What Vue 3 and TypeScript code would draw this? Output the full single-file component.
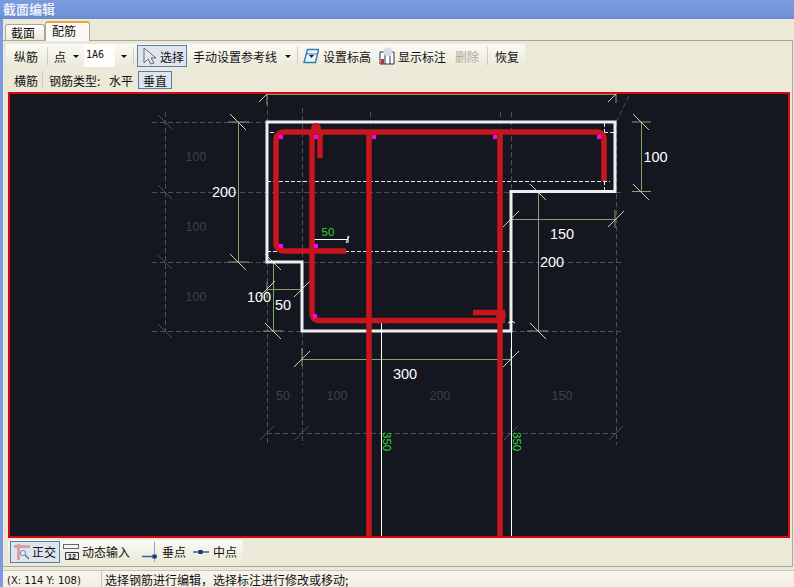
<template>
  <div class="win">
    <div class="title">截面编辑</div>
    <div class="body">
      <div class="tabs">
        <div class="tab">截面</div>
        <div class="tab active">配筋</div>
      </div>
      <div class="panel">
        <div class="bar bar1">
          <span class="item label">纵筋</span>
          <i class="sep"></i>
          <span class="item dots">点<b class="arrow"></b></span>
          <span class="combo">1A6</span>
          <b class="arrow a2"></b>
          <i class="sep s2"></i>
          <button class="btn sel">
            <svg width="16" height="18" viewBox="0 0 16 18"><path d="M3 1v15l4-4 3 5 3-1-3-5h5z" fill="#e8e8e8" stroke="#667" stroke-width="1"/></svg>
            选择
          </button>
          <span class="item ref">手动设置参考线<b class="arrow a3"></b></span>
          <i class="sep s5"></i>
          <span class="item ico">
            <svg width="16" height="16" viewBox="0 0 16 16"><path d="M4.500 1.500h11l-3 13H1z" fill="#eef6fb" stroke="#2f7fb5" stroke-width="1.400"/><path d="M3.500 6h11" stroke="#2f7fb5"/><path d="M6 7h5l-2.500 3z" fill="#123"/></svg>
            设置标高
          </span>
          <span class="item ico i2">
            <svg width="16" height="18" viewBox="0 0 16 18"><path d="M1 5h14v12H1z" fill="#fff" stroke="#234"/><path d="M6 5v12M11 5v12" stroke="#234"/><circle cx="9" cy="5" r="4.500" fill="#d8dce0"/><path d="M2 12h3v5H2z" fill="#b33"/></svg>
            显示标注
          </span>
          <span class="item off">删除</span>
          <i class="sep s3"></i>
          <span class="item last">恢复</span>
        </div>
        <div class="bar bar2">
          <span class="item label">横筋</span>
          <i class="sep s4"></i>
          <span class="item type">钢筋类型:</span>
          <span class="item flat">水平</span>
          <button class="btn vert">垂直</button>
        </div>
        <div class="canvas">
          <svg class="draw" viewBox="10 94 778 442" width="778" height="442">
            <g stroke="#4c5054" stroke-dasharray="5 3" fill="none">
              <path v-for="l in grid" :key="l" :d="l" />
            </g>
            <g stroke="#4c5054">
              <path v-for="t in grayTicks" :key="t" :d="t" />
            </g>
            <g stroke="#e8e8e8" stroke-dasharray="4 2" fill="none">
              <path d="M267 181.500H610M267 251.500H510M270 132.500h6M604 132.500h11M604.500 123v9M604.500 181v10" />
            </g>
            <g fill="#3e4248" class="ghost">
              <text v-for="g in ghosts" :key="g.x + '-' + g.y" :x="g.x" :y="g.y" text-anchor="middle">{{ g.t }}</text>
            </g>
            <g stroke="#7fa56d" fill="none">
              <path d="M267 94.500H616M267 92v13M616 92v11" />
              <path d="M238.500 122V262M228 122h21M228 262h21" />
              <path d="M641.500 122V192M632 122h19M632 191.500h19" />
              <path d="M511 219.500H615M511 210v18M615 210v18" />
              <path d="M538.500 192V331M527 192h21M527 331h21" />
              <path d="M302 359.500H511M302 348v18M511 348v18" />
              <path d="M273.500 262V331M263 262h20M263 331h20" />
              <path d="M267 289.500H302M267 282v16M302 278v18" />
            </g>
            <g stroke="#c8d4c0" fill="none">
              <path v-for="t in ticks" :key="t" :d="t" />
            </g>
            <path class="outline" d="M267 122H615V191.500H511V331H302V262H267Z" />
            <g stroke="#fff" fill="none">
              <path d="M381.500 321V536M511.500 321V536" />
              <path d="M378 323l3.500-2 3.500 2M508 323l3.500-2 3.500 2" />
              <path d="M311 239.500H348M311 236v7M348 236v7M313 236l-3 7M349 236l-3 7" />
            </g>
            <g class="rebar">
              <path d="M369 132V536M500 132V536" />
              <path d="M346 251H285Q276 251 276 242V141Q276 132 285 132H596Q604 132 604 140V181" />
              <path d="M320 158V132M312 132V312Q312 320.500 320 320.500H505" />
              <path d="M473 312.500H505" />
              <circle cx="316" cy="128" r="5" class="knob" />
              <circle cx="501" cy="315" r="5" class="knob" />
            </g>
            <rect v-for="p in pins" :key="p[0] + '-' + p[1]" :x="p[0] - 2" :y="p[1] - 2" width="4" height="4" fill="#f0f" />
            <g fill="#fff" class="dim">
              <text x="224" y="196.500" text-anchor="middle">200</text>
              <text x="655.500" y="161.500" text-anchor="middle">100</text>
              <text x="562" y="238.500" text-anchor="middle">150</text>
              <text x="552" y="267" text-anchor="middle">200</text>
              <text x="405" y="379" text-anchor="middle">300</text>
              <text x="259" y="301.500" text-anchor="middle">100</text>
              <text x="283" y="309.500" text-anchor="middle">50</text>
            </g>
            <g fill="#35d435" class="small">
              <text x="328" y="236" text-anchor="middle">50</text>
              <text transform="translate(383 432) rotate(90)">350</text>
              <text transform="translate(513 432) rotate(90)">350</text>
            </g>
          </svg>
        </div>
        <div class="bar bar3">
          <button class="btn ortho">
            <svg width="18" height="18" viewBox="0 0 18 18"><path d="M1 3.500h16M5.500 1v16" stroke="#d9a0a0" stroke-width="3" fill="none"/><circle cx="10" cy="10" r="2.500" fill="#eef" stroke="#789"/><path d="M12 12l4 4" stroke="#678" stroke-width="1.500"/></svg>
            正交
          </button>
          <span class="item dyn">
            <svg width="16" height="18" viewBox="0 0 16 18"><path d="M0 1.500h16M0 5.500h16M.5 1v5M15.500 1v5" stroke="#667" fill="none"/><path d="M2.500 9.500h13v7h-13z" fill="#e8e8e8" stroke="#334"/><text x="9" y="16" class="mini">12</text></svg>
            动态输入
          </span>
          <span class="item perp">
            <svg width="16" height="20" viewBox="0 0 16 20"><path d="M0 14.500h15" stroke="#2b5fa8" stroke-width="1.500"/><path d="M12.500 0v20" stroke="#8aa4cc"/><rect x="10.500" y="12.500" width="4" height="4" fill="#123a70"/></svg>
            垂点
          </span>
          <span class="item mid">
            <svg width="16" height="8" viewBox="0 0 16 8"><path d="M0 4h16" stroke="#2b5fa8" stroke-width="1.500"/><rect x="5.500" y="2" width="4" height="4" fill="#123a70"/></svg>
            中点
          </span>
        </div>
      </div>
      <div class="status">
        <span class="coord">(X: 114 Y: 108)</span>
        <span class="msg">选择钢筋进行编辑，选择标注进行修改或移动;</span>
      </div>
    </div>
  </div>
</template>

<script setup lang="ts">
type Ghost = { x: number; y: number; t: string };

const grid: string[] = [
  'M152 122.500H267', 'M152 192.500H623', 'M152 262.500H623', 'M152 331.500H623', 'M267 433.500H617',
  'M165.500 112V331', 'M267.500 94V445', 'M302.500 108V445', 'M370.500 112V124', 'M500.500 112V124',
  'M511.500 112V445', 'M616.500 122V445', 'M616 122L630 94',
];

const grayTicks: string[] = [122, 192, 262, 331].map((y) => `M158 ${y - 7}L172 ${y + 7}`)
  .concat([267, 302, 511, 616].map((x) => `M${x - 7} 440L${x + 7} 426`));

const ghosts: Ghost[] = [
  { x: 196, y: 161, t: '100' }, { x: 196, y: 231, t: '100' }, { x: 196, y: 301, t: '100' },
  { x: 283, y: 400, t: '50' }, { x: 337, y: 400, t: '100' }, { x: 440, y: 400, t: '200' }, { x: 562, y: 400, t: '150' },
];

const back = (x: number, y: number) => `M${x - 8} ${y - 8}L${x + 8} ${y + 8}`;
const fwd = (x: number, y: number) => `M${x - 8} ${y + 8}L${x + 8} ${y - 8}`;

const ticks: string[] = [
  fwd(267, 94), fwd(616, 94),
  back(238, 122), back(238, 262),
  back(641, 122), back(641, 192),
  fwd(511, 219), fwd(616, 219),
  back(538, 192), back(538, 331),
  fwd(302, 359), fwd(511, 359),
  back(273, 262), back(273, 331),
  fwd(267, 289), fwd(302, 289),
];

const pins: number[][] = [
  [281, 137], [316, 137], [374, 137], [495, 137], [599, 137],
  [281, 246], [316, 246], [315, 316],
];
</script>

<style>
html, body {
  margin: 0;
  background: #ece9d8;
}
</style>

<style scoped>
.win {
  width: 794px;
  height: 587px;
  display: flex;
  flex-direction: column;
  overflow: hidden;
  font: 12px "Noto Sans CJK SC", "Liberation Sans", sans-serif;
  color: #111;
  background: #ece9d8;
}
.title {
  height: 19px;
  line-height: 18px;
  padding-left: 3px;
  font-size: 13px;
  font-weight: 700;
  color: #e8eefb;
  text-shadow: 1px 1px 0 #6a86c8;
  background: linear-gradient(#7c9ce0, #7394dc 70%, #6b8ad0);
}
.body {
  flex: 1;
  display: flex;
  flex-direction: column;
  min-height: 0;
  border-left: 3px solid #7b9ae0;
  padding-top: 1px;
}
.tabs {
  height: 20px;
  display: flex;
  align-items: flex-end;
  padding-left: 2px;
}
.tab {
  width: 40px;
  height: 16px;
  box-sizing: border-box;
  padding-right: 4px;
  line-height: 16px;
  text-align: center;
  background: linear-gradient(#fff, #ece9d8);
  border: 1px solid #a8a79c;
  border-bottom: 0;
  border-radius: 3px 3px 0 0;
}
.tab.active {
  width: 45px;
  height: 20px;
  padding-right: 7px;
  line-height: 16px;
  background: #fbfaf6;
  border-top: 2px solid #eba63a;
  position: relative;
  top: 1px;
}
.panel {
  flex: none;
  height: 522px;
  display: flex;
  flex-direction: column;
  margin-right: 1px;
  border: 1px solid #a8a79c;
  border-left: 0;
  padding: 3px 0 0 3px;
}
.bar {
  flex: none;
  display: flex;
  align-items: center;
  width: fit-content;
  background: linear-gradient(#fafaf6, #ece9d8);
  white-space: nowrap;
}
.bar1 {
  width: 519px;
  height: 24px;
  margin-bottom: 2px;
}
.bar2 {
  height: 20px;
  margin-bottom: 2px;
  background: none;
}
.item {
  display: inline-flex;
  align-items: center;
}
.label {
  margin-left: 8px;
}
.sep {
  width: 1px;
  height: 18px;
  margin: 0 6px 0 9px;
  background: #cfcdbf;
}
.s2 {
  margin: 0 3px 0 6px;
}
.s3 {
  margin: 0 7px 0 8px;
}
.s4 {
  margin: 0 6px 0 4px;
}
.s5 {
  margin: 0 5px 0 6px;
}
.arrow {
  display: inline-block;
  width: 0;
  height: 0;
  margin-left: 7px;
  border: 3px solid transparent;
  border-top: 3px solid #111;
  border-bottom: 0;
}
.combo {
  width: 31px;
  height: 22px;
  margin-left: 5px;
  padding-left: 2px;
  box-sizing: border-box;
  font: 10px/20px "DejaVu Sans Mono", monospace;
  background: #fdfdfb;
}
.a2 {
  margin-left: 6px;
}
.btn {
  display: inline-flex;
  align-items: center;
  box-sizing: border-box;
  padding: 0;
  font: inherit;
  color: inherit;
  background: #dfe5ee;
  border: 1px solid #5a7da8;
}
.sel {
  width: 50px;
  height: 22px;
  gap: 3px;
  padding-left: 3px;
}
.ref {
  margin-left: 6px;
}
.a3 {
  margin-left: 8px;
}
.ico {
  gap: 4px;
}
.i2 {
  gap: 3px;
  margin-left: 8px;
}
.off {
  margin-left: 9px;
  color: #aca899;
}
.type {
  width: 60px;
}
.vert {
  width: 34px;
  height: 18px;
  justify-content: center;
  margin-left: 5px;
}
.canvas {
  flex: none;
  width: 782px;
  height: 446px;
  box-sizing: border-box;
  margin-left: 2px;
  border: 2px solid #d8080c;
  background: #14171f;
  overflow: hidden;
}
.draw {
  display: block;
}
.outline {
  fill: none;
  stroke: #eeeeee;
  stroke-width: 3;
}
.rebar path {
  fill: none;
  stroke: #c8161e;
  stroke-width: 5.5;
}
.knob {
  fill: #c8161e;
}
.ghost {
  font: 12.500px "Liberation Sans", sans-serif;
}
.dim {
  font: 14.500px "Liberation Sans", sans-serif;
}
.small {
  font: 11.500px "Liberation Sans", sans-serif;
}
.mini {
  font: 700 7px "Liberation Sans", sans-serif;
  text-anchor: middle;
  fill: #111;
}
.bar3 {
  height: 23px;
  margin-top: 2px;
  margin-left: 2px;
  padding: 0 6px 0 2px;
}
.ortho {
  width: 50px;
  height: 22px;
  gap: 1px;
  padding-left: 2px;
}
.dyn {
  gap: 3px;
  margin-left: 3px;
}
.perp {
  gap: 4px;
  margin-left: 12px;
}
.mid {
  gap: 4px;
  margin-left: 7px;
}
.status {
  flex: 1;
  display: flex;
  align-items: center;
  margin-top: 3px;
  border-top: 1px solid #c8c6b6;
  background: linear-gradient(#f6f4ec, #f1efe4);
}
.coord {
  width: 94px;
  padding-left: 4px;
  font: 10px "DejaVu Sans", sans-serif;
  white-space: nowrap;
}
.msg {
  height: 100%;
  line-height: 18px;
  padding-left: 3px;
  border-left: 1px solid #c8c6b6;
}
</style>
